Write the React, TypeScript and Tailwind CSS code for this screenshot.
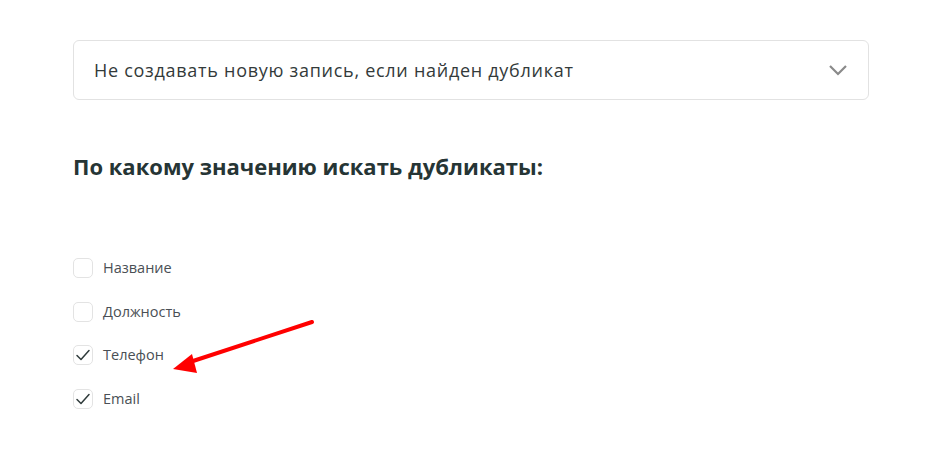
import React from "react";

const items = [
  { label: "Название", checked: false },
  { label: "Должность", checked: false },
  { label: "Телефон", checked: true },
  { label: "Email", checked: true },
];

function Box({ checked }: { checked: boolean }) {
  return (
    <div className="w-5 h-5 rounded-[5px] border border-[#e3e3e3] bg-white flex items-center justify-center shrink-0">
      {checked && (
        <svg width="16" height="14" viewBox="0 0 16 14" fill="none">
          <path d="M2 7.5 L6 11.5 L14 2.5" stroke="#2f3b3b" strokeWidth="1.5" strokeLinecap="round" strokeLinejoin="round" />
        </svg>
      )}
    </div>
  );
}

export default function App() {
  return (
    <div className="relative w-[943px] h-[470px] bg-white" style={{ fontFamily: "'Open Sans', 'Noto Sans', sans-serif" }}>
      <div className="pl-[73px] pt-[40px] w-[870px]">
        <div className="h-[60px] w-[796px] border border-[#e2e2e2] rounded-[6px] flex items-center justify-between pl-[20px] pr-[20px]">
          <span className="text-[18px] text-[#333a3a] tracking-[0.72px]">Не создавать новую запись, если найден дубликат</span>
          <svg width="20" height="12" viewBox="0 0 20 12" fill="none">
            <path d="M2 2 L10 10 L18 2" stroke="#8a8a8a" strokeWidth="2.2" />
          </svg>
        </div>
        <h2 className="mt-[51px] text-[22px] font-bold text-[#263535] leading-[30px]">По какому значению искать дубликаты:</h2>
        <div className="mt-[77px] flex flex-col gap-[23.5px]">
          {items.map((it) => (
            <div key={it.label} className="flex items-center gap-[10px] h-5">
              <Box checked={it.checked} />
              <span className="text-[14.5px] text-[#4a4f55]">{it.label}</span>
            </div>
          ))}
        </div>
      </div>
      <svg className="absolute left-0 top-0 pointer-events-none" width="943" height="470">
        <line x1="312" y1="322" x2="190" y2="362" stroke="#ff0000" strokeWidth="4" strokeLinecap="round" />
        <polygon points="173,369 192,354 197,373" fill="#ff0000" />
      </svg>
    </div>
  );
}
